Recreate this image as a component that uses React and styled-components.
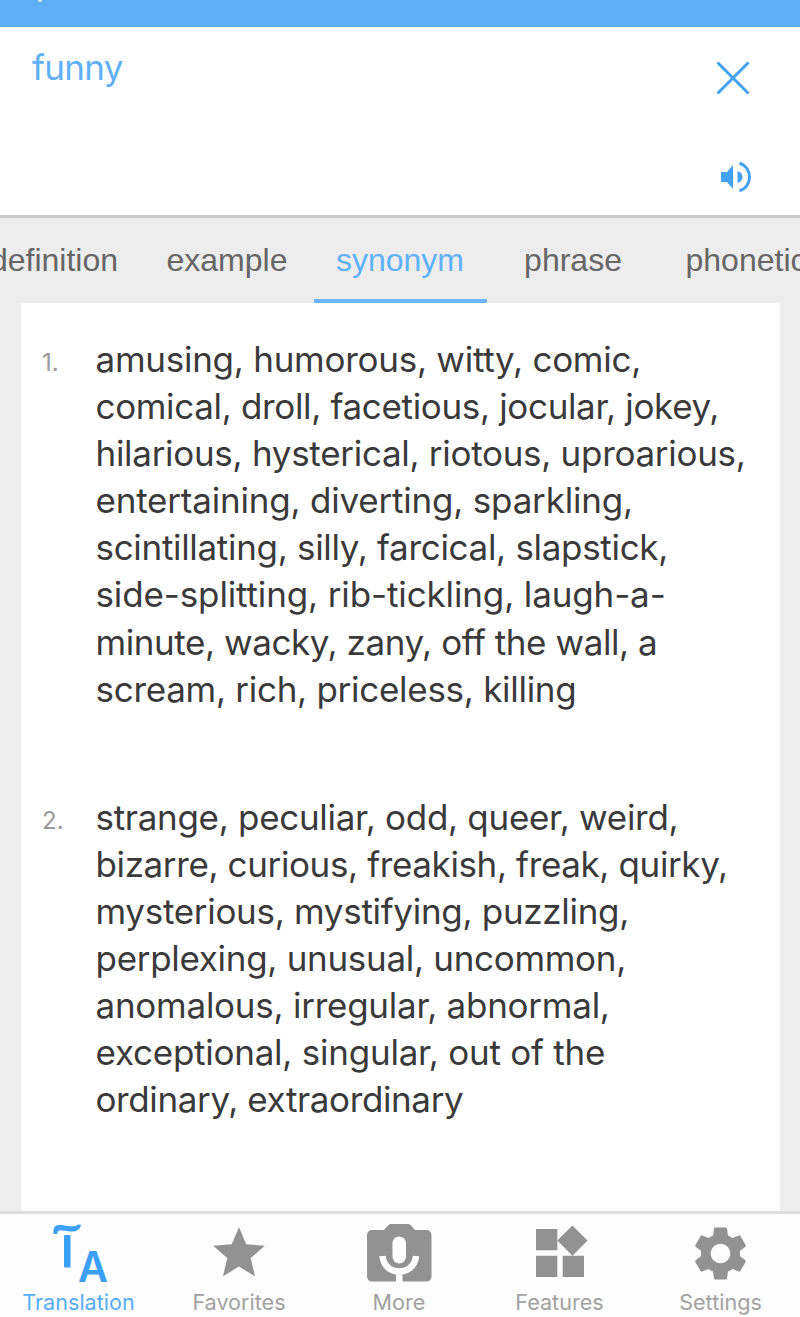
import React, { useState } from 'react';
import styled, { createGlobalStyle } from 'styled-components';
import { MdStar, MdWidgets, MdSettings } from 'react-icons/md';

const tabs = ['definition', 'example', 'synonym', 'phrase', 'phonetic'];

const synonyms = [
    [
        { text: 'amusing, humorous, witty, comic,', spacing: -0.26 },
        { text: 'comical, droll, facetious, jocular, jokey,', spacing: -0.34 },
        { text: 'hilarious, hysterical, riotous, uproarious,', spacing: -0.29 },
        { text: 'entertaining, diverting, sparkling,', spacing: -0.2 },
        { text: 'scintillating, silly, farcical, slapstick,', spacing: -0.31 },
        { text: 'side-splitting, rib-tickling, laugh-a-', spacing: -0.13 },
        { text: 'minute, wacky, zany, off the wall, a', spacing: -0.43 },
        { text: 'scream, rich, priceless, killing', spacing: -0.28 },
    ],
    [
        { text: 'strange, peculiar, odd, queer, weird,', spacing: -0.3 },
        { text: 'bizarre, curious, freakish, freak, quirky,', spacing: -0.38 },
        { text: 'mysterious, mystifying, puzzling,', spacing: -0.3 },
        { text: 'perplexing, unusual, uncommon,', spacing: -0.3 },
        { text: 'anomalous, irregular, abnormal,', spacing: -0.25 },
        { text: 'exceptional, singular, out of the', spacing: -0.24 },
        { text: 'ordinary, extraordinary', spacing: -0.38 },
    ],
];

const TranslateIcon = () => (
    <svg width="64" height="64" viewBox="0 0 64 64" fill="currentColor" overflow="visible">
        <path d="M6.500 14V11C6.500 5.500 10 4.300 16 5.300c7 1.200 12 1.800 15-.8l3 .2c-1 5.300-5 7-10 6.800-5-.2-9-1.700-11.500-1.100-1.800.4-2 1.600-2.200 3.600z" />
        <rect x="17" y="15" width="6.500" height="32.500" rx="1" />
        <text x="31" y="61.500" fontSize="43" fontWeight="600" fontFamily="Inter, sans-serif" textLength="30" lengthAdjust="spacingAndGlyphs">A</text>
    </svg>
);

const CameraMicIcon = () => (
    <svg width="66" height="64" viewBox="0 0 66 64" fill="none">
        <path fill="currentColor" d="M6.500 10H18l4.500-5Q23.500 4 25 4h17q1.500 0 2.500 1l4.500 5h11q5.500 0 5.500 5.500v40.500q0 5.500-5.500 5.500H6.500Q1 61.500 1 56V15.500Q1 10 6.500 10z" />
        <rect x="26.500" y="16.500" width="13.500" height="27" rx="6.750" fill="#fff" />
        <path stroke="#fff" strokeWidth="6.500" d="M16.500 36c1 10 8 15.500 16.700 15.500S49 46 50 36M33.200 51v11" />
    </svg>
);

const SpeakerIcon = () => (
    <svg width="34" height="34" viewBox="0 0 34 34" fill="none">
        <path fill="currentColor" d="M2 12h6l6-7v24l-6-7H2z" />
        <path fill="currentColor" d="M18.500 11q5 1.500 5 6t-5 6z" />
        <path stroke="currentColor" strokeWidth="3" d="M20.500 3.200C27 5 30.500 11 30.500 17S27 29 20.500 30.800" />
    </svg>
);

const CloseIcon = () => (
    <svg width="34" height="34" viewBox="0 0 34 34" fill="none">
        <path stroke="currentColor" strokeWidth="3" d="M1.500 1.500l31 31M32.500 1.500l-31 31" />
    </svg>
);

const navItems = [
    { label: 'Translation', icon: <TranslateIcon />, width: 157 },
    { label: 'Favorites', icon: <MdStar size={62} />, width: 164, offset: 3 },
    { label: 'More', icon: <CameraMicIcon />, width: 156 },
    { label: 'Features', icon: <MdWidgets size={64} />, width: 165, offset: 3 },
    { label: 'Settings', icon: <MdSettings size={65} />, width: 157, offset: 3 },
];

const App = () => {
    const [activeTab, setActiveTab] = useState('synonym');
    const [activeNav, setActiveNav] = useState('Translation');

    return (
        <Screen>
            <GlobalStyle />
            <TopBar><TitleTail /></TopBar>
            <SearchBox>
                <Word>funny</Word>
                <SearchActions>
                    <IconButton aria-label="clear"><CloseIcon /></IconButton>
                    <SpeakButton aria-label="listen"><SpeakerIcon /></SpeakButton>
                </SearchActions>
            </SearchBox>
            <TabBar>
                {tabs.map((tab) => (
                    <Tab key={tab} $active={tab === activeTab} onClick={() => setActiveTab(tab)}>
                        {tab}
                    </Tab>
                ))}
            </TabBar>
            <Content>
                <Card>
                    {synonyms.map((lines, i) => (
                        <Entry key={i}>
                            <Index>{i + 1}.</Index>
                            <Words>
                                {lines.map((line) => (
                                    <Line key={line.text} $spacing={line.spacing}>{line.text}</Line>
                                ))}
                            </Words>
                        </Entry>
                    ))}
                </Card>
            </Content>
            <BottomNav>
                {navItems.map(({ label, icon, width, offset }) => (
                    <NavItem
                        key={label}
                        $width={width}
                        $active={label === activeNav}
                        onClick={() => setActiveNav(label)}
                    >
                        <NavIcon $offset={offset}>{icon}</NavIcon>
                        <span>{label}</span>
                    </NavItem>
                ))}
            </BottomNav>
        </Screen>
    )
}

const GlobalStyle = createGlobalStyle`
    *{
        box-sizing: border-box;
    }

    body{
        margin: 0;
        overflow: hidden;
        background: #ededed;
    }

    button{
        border: none;
        background: transparent;
        padding: 0;
        margin: 0;
    }

    svg{
        display: block;
    }
`;

const Screen = styled.div`
    display: flex;
    flex-direction: column;
    width: 800px;
    height: 1317px;
    overflow: hidden;
    background: #ededed;
    font-family: Inter, sans-serif;
`;

const TopBar = styled.header`
    flex: none;
    height: 27px;
    padding-left: 38px;
    background: #5fb0f6;
`;

const TitleTail = styled.div`
    width: 4px;
    height: 2px;
    border-radius: 0 0 2px 2px;
    background: #d9edfd;
`;

const SearchBox = styled.section`
    flex: none;
    display: flex;
    justify-content: space-between;
    height: 191px;
    padding: 18px 47px 0 32px;
    background: #fff;
    border-bottom: 3px solid #c9c9c9;
    color: #44a2f4;
`;

const Word = styled.div`
    font-size: 35px;
    line-height: 44px;
    letter-spacing: -0.7px;
    color: #5fb0f8;
`;

const SearchActions = styled.div`
    display: flex;
    flex-direction: column;
    align-items: flex-end;
    padding-top: 16px;
    gap: 65px;
`;

const IconButton = styled.button`
    color: inherit;
    margin-right: 3px;
`;

const SpeakButton = styled(IconButton)`
    margin-right: 0;
`;

const TabBar = styled.nav`
    flex: none;
    display: flex;
    height: 85px;
    margin-left: -32.500px;
`;

const Tab = styled.button`
    flex: none;
    width: 173px;
    padding-top: 3px;
    border-bottom: 4px solid ${({ $active }) => ($active ? '#6db5f8' : 'transparent')};
    font-family: 'Liberation Sans', sans-serif;
    font-size: 32px;
    line-height: 40px;
    color: ${({ $active }) => ($active ? '#5fb1fa' : '#666')};
`;

const Content = styled.main`
    flex: 1;
    min-height: 0;
    padding: 0 20px 0 21px;
`;

const Card = styled.div`
    display: flex;
    flex-direction: column;
    gap: 81px;
    height: 100%;
    padding: 33px 0 0 21px;
    background: #fff;
`;

const Entry = styled.div`
    display: flex;
`;

const Index = styled.div`
    flex: none;
    width: 53.500px;
    padding-top: 3px;
    font-size: 24px;
    line-height: 47px;
    color: #999;
`;

const Words = styled.div`
    font-size: 35px;
    line-height: 47.1px;
    color: #3a3a3a;
`;

const Line = styled.div`
    white-space: nowrap;
    letter-spacing: ${({ $spacing }) => $spacing}px;
`;

const BottomNav = styled.nav`
    flex: none;
    display: flex;
    height: 106px;
    background: #fdfdfd;
    border-top: 3px solid #dedede;
`;

const NavItem = styled.button`
    flex: none;
    display: flex;
    flex-direction: column;
    align-items: center;
    width: ${({ $width }) => $width}px;
    font-family: Inter, sans-serif;
    font-size: 21.6px;
    line-height: 26px;
    color: ${({ $active }) => ($active ? '#3b9ff5' : '#929292')};

    span{
        opacity: 0.85;
    }
`;

const NavIcon = styled.div`
    display: flex;
    align-items: center;
    height: 75px;
    padding-top: ${({ $offset }) => $offset || 0}px;
`;

export default App;
